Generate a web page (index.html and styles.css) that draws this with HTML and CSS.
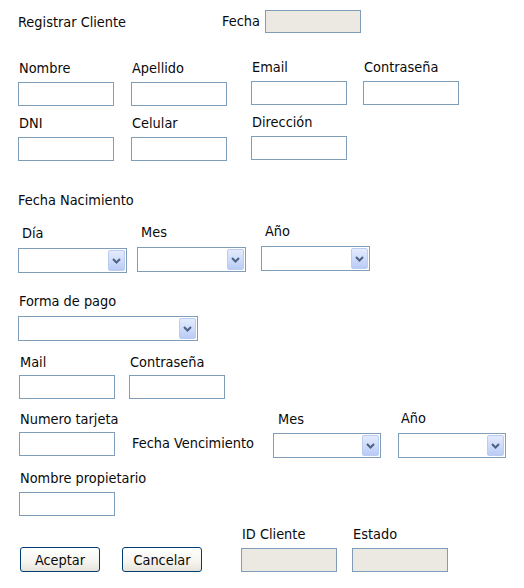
FILE: index.html
```html
<!DOCTYPE html>
<html lang="es">
<head>
<meta charset="utf-8">
<title>Registrar Cliente</title>
<link rel="stylesheet" href="styles.css">
</head>
<body>
<form class="form">
  <div class="header">
    <span class="title">Registrar Cliente</span>
    <label class="hdr-label">Fecha</label>
    <input class="txt" type="text" disabled>
  </div>

  <div class="grid4 row1">
    <div class="field"><label>Nombre</label><input class="txt" type="text"></div>
    <div class="field"><label>Apellido</label><input class="txt" type="text"></div>
    <div class="field up1"><label>Email</label><input class="txt" type="text"></div>
    <div class="field up1"><label>Contraseña</label><input class="txt" type="password"></div>
  </div>

  <div class="grid4 row2">
    <div class="field"><label>DNI</label><input class="txt" type="text"></div>
    <div class="field"><label>Celular</label><input class="txt" type="text"></div>
    <div class="field up1"><label>Dirección</label><input class="txt" type="text"></div>
  </div>

  <div class="section-label">Fecha Nacimiento</div>

  <div class="dates">
    <div class="field sel-field"><label>Día</label>
      <div class="combo"><select></select><span class="arrow"><svg width="9" height="6" viewBox="0 0 9 6"><polyline points="1,1 4.5,4.5 8,1" fill="none" stroke="#4d6185" stroke-width="2"/></svg></span></div>
    </div>
    <div class="field sel-field up1"><label>Mes</label>
      <div class="combo"><select></select><span class="arrow"><svg width="9" height="6" viewBox="0 0 9 6"><polyline points="1,1 4.5,4.5 8,1" fill="none" stroke="#4d6185" stroke-width="2"/></svg></span></div>
    </div>
    <div class="field sel-field up2"><label>Año</label>
      <div class="combo"><select></select><span class="arrow"><svg width="9" height="6" viewBox="0 0 9 6"><polyline points="1,1 4.5,4.5 8,1" fill="none" stroke="#4d6185" stroke-width="2"/></svg></span></div>
    </div>
  </div>

  <div class="field pago">
    <label>Forma de pago</label>
    <div class="combo wide"><select></select><span class="arrow"><svg width="9" height="6" viewBox="0 0 9 6"><polyline points="1,1 4.5,4.5 8,1" fill="none" stroke="#4d6185" stroke-width="2"/></svg></span></div>
  </div>

  <div class="row-mail">
    <div class="field tight"><label>Mail</label><input class="txt" type="text"></div>
    <div class="field tight"><label>Contraseña</label><input class="txt" type="password"></div>
  </div>

  <div class="row-tarjeta">
    <div class="field tight card"><label>Numero tarjeta</label><input class="txt" type="text"></div>
    <span class="venc">Fecha Vencimiento</span>
    <div class="field mes-v"><label>Mes</label>
      <div class="combo"><select></select><span class="arrow"><svg width="9" height="6" viewBox="0 0 9 6"><polyline points="1,1 4.5,4.5 8,1" fill="none" stroke="#4d6185" stroke-width="2"/></svg></span></div>
    </div>
    <div class="field anio-v"><label>Año</label>
      <div class="combo"><select></select><span class="arrow"><svg width="9" height="6" viewBox="0 0 9 6"><polyline points="1,1 4.5,4.5 8,1" fill="none" stroke="#4d6185" stroke-width="2"/></svg></span></div>
    </div>
  </div>

  <div class="field owner"><label>Nombre propietario</label><input class="txt" type="text"></div>

  <div class="row-bottom">
    <button type="button" class="btn">Aceptar</button>
    <button type="button" class="btn">Cancelar</button>
    <div class="field id-field"><label>ID Cliente</label><input class="txt" type="text" disabled></div>
    <div class="field up1"><label>Estado</label><input class="txt" type="text" disabled></div>
  </div>
</form>
</body>
</html>
```

FILE: styles.css
```css
html, body {
  margin: 0;
  padding: 0;
  background: #ffffff;
}

body {
  font-family: "DejaVu Sans Condensed", "DejaVu Sans", sans-serif;
  font-size: 14.4px;
  line-height: 16px;
  color: #0a0a0a;
}

.form {
  display: flex;
  flex-direction: column;
  align-items: flex-start;
  padding-top: 10px;
}

/* header */
.header {
  display: flex;
  align-items: center;
  height: 23px;
  margin-left: 18px;
}
.title {
  width: 204px;
}
.hdr-label {
  width: 43px;
  margin-bottom: 2px;
}
.header .txt {
  height: 23px;
}

/* generic field */
.field {
  display: flex;
  flex-direction: column;
  align-items: flex-start;
}
.field label {
  display: block;
  height: 16px;
  margin-bottom: 6px;
  padding-left: 1px;
  white-space: nowrap;
}
.field.tight label {
  margin-bottom: 5px;
}
.field.up1 {
  margin-top: -1px;
}
.field.up2 {
  margin-top: -2px;
}

.txt {
  box-sizing: border-box;
  width: 96px;
  height: 24px;
  margin: 0;
  padding: 2px 3px;
  border: 1px solid #7f9db9;
  background: #ffffff;
  font: inherit;
}
.txt:disabled {
  background: #ece9e2;
}

/* rows 1 and 2 */
.grid4 {
  display: grid;
  grid-template-columns: 113px 120px 112px 96px;
  align-items: start;
  margin-left: 18px;
}
.row1 {
  margin-top: 27px;
}
.row2 {
  margin-top: 9px;
}

.section-label {
  margin-top: 31px;
  margin-left: 18px;
}

/* combo boxes */
.combo {
  position: relative;
  box-sizing: border-box;
  width: 109px;
  height: 25px;
}
.combo.wide {
  width: 180px;
}
.combo select {
  box-sizing: border-box;
  width: 100%;
  height: 100%;
  margin: 0;
  border: 1px solid #7f9db9;
  border-radius: 0;
  background: #ffffff;
  appearance: none;
  -webkit-appearance: none;
  font: inherit;
}
.arrow {
  position: absolute;
  top: 2px;
  right: 2px;
  bottom: 2px;
  width: 17px;
  box-sizing: border-box;
  display: flex;
  align-items: center;
  justify-content: center;
  border: 1px solid #bccbf0;
  border-radius: 2px;
  background: linear-gradient(to bottom, #e3ebfd 0%, #cfdcfa 50%, #b9cbf6 100%);
  pointer-events: none;
}

.dates {
  display: grid;
  grid-template-columns: 119px 124px 109px;
  align-items: start;
  margin-top: 17px;
  margin-left: 18px;
}
.sel-field label {
  padding-left: 4px;
  margin-bottom: 7px;
}

.pago {
  margin-top: 20px;
  margin-left: 18px;
}
.pago label {
  margin-bottom: 7px;
}

.row-mail {
  display: grid;
  grid-template-columns: 110px 96px;
  margin-top: 13px;
  margin-left: 19px;
}

.row-tarjeta {
  display: flex;
  align-items: flex-end;
  margin-top: 11px;
  margin-left: 19px;
}
.card {
  width: 113px;
  margin-bottom: 2px;
}
.venc {
  width: 141px;
  margin-bottom: 7px;
  white-space: nowrap;
}
.mes-v {
  width: 125px;
}
.mes-v label {
  padding-left: 5px;
}
.anio-v label {
  padding-left: 3px;
  margin-bottom: 7px;
}
.mes-v .combo,
.anio-v .combo {
  width: 108px;
}

.owner {
  margin-top: 12px;
  margin-left: 19px;
}

.row-bottom {
  display: flex;
  align-items: flex-end;
  margin-top: 10px;
  margin-left: 20px;
}
.btn {
  box-sizing: border-box;
  width: 80px;
  height: 25px;
  margin: 0;
  padding: 0;
  border: 1px solid #003c74;
  border-radius: 3px;
  background: linear-gradient(to bottom, #ffffff 0%, #f5f4ef 60%, #e6e3d9 100%);
  font: inherit;
  color: #0a0a0a;
}
.btn + .btn {
  margin-left: 22px;
}
.id-field {
  width: 111px;
  margin-left: 39px;
}
```
